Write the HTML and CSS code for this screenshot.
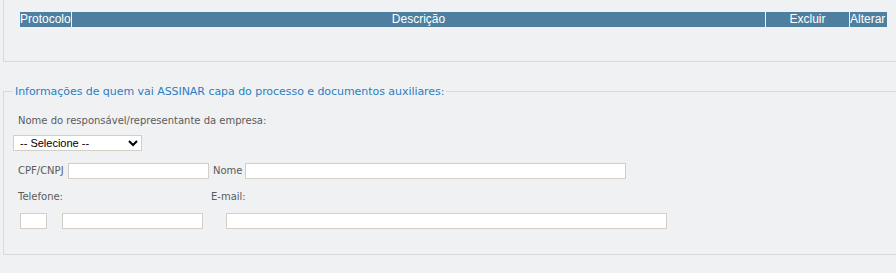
FILE: index.html
```html
<!DOCTYPE html>
<html lang="pt-BR">
<head>
<meta charset="utf-8">
<title>Assinatura</title>
<link rel="stylesheet" href="styles.css">
</head>
<body>
<div class="panel">
  <div class="thead">
    <div class="th th-proto">Protocolo</div>
    <div class="th th-desc">Descrição</div>
    <div class="th th-excl">Excluir</div>
    <div class="th th-alt">Alterar</div>
  </div>
</div>
<fieldset class="fs">
  <legend class="lg">Informações de quem vai ASSINAR capa do processo e documentos auxiliares:</legend>
  <div class="lbl lbl-resp">Nome do responsável/representante da empresa:</div>
  <select class="sel"><option>-- Selecione --</option></select>
  <div class="row row-cpf">
    <span class="lbl lbl-cpf">CPF/CNPJ</span>
    <input class="inp inp-cpf" type="text">
    <span class="lbl lbl-nome">Nome</span>
    <input class="inp inp-nome" type="text">
  </div>
  <div class="row row-tel">
    <span class="lbl lbl-tel">Telefone:</span>
    <span class="lbl">E-mail:</span>
  </div>
  <div class="row row-in">
    <input class="inp inp-ddd" type="text">
    <input class="inp inp-fone" type="text">
    <input class="inp inp-mail" type="text">
  </div>
</fieldset>
</body>
</html>
```
FILE: styles.css
```css
html, body { margin: 0; padding: 0; overflow: hidden; }
body { background: #f0f1f3; width: 896px; height: 273px; font-family: "DejaVu Sans", Verdana, sans-serif; }

.panel { margin-left: 3px; height: 62px; border-left: 1px solid #d8d9dc; border-bottom: 1px solid #d8d9dc; padding: 12px 0 0 16px; box-sizing: border-box; }
.thead { display: flex; width: 867px; font-family: "Liberation Sans", Arial, sans-serif; font-size: 12px; line-height: 15px; color: #fff; }
.th { background: #4e7fa1; height: 15px; white-space: nowrap; }
.th-proto { width: 51px; }
.th-desc { width: 693px; margin-left: 1px; text-align: center; }
.th-excl { width: 83px; margin-left: 1px; text-align: center; }
.th-alt { width: 37px; margin-left: 1px; }

.fs { margin: 23px 0 0 3px; border: 1px solid #d8d9dc; border-right: 0; padding: 0 0 25px 9px; min-width: 0; }
.lg { padding: 0 2px; font-size: 11px; line-height: 13px; color: #2c7ec2; letter-spacing: -0.05px; }

.lbl { font-size: 10px; line-height: 14px; color: #5b5b5b; white-space: nowrap; }
.lbl-resp { margin: 16px 0 0 5px; }
.sel { display: block; margin: 7px 0 0 0; width: 129px; height: 16px; box-sizing: border-box; border: 1px solid #d3cfc6; background: #fff; font-family: "Liberation Sans", Arial, sans-serif; font-size: 11px; color: #000; padding: 0 0 0 2px; }

.row { display: flex; align-items: center; }
.row-cpf { margin-top: 12px; padding-left: 5px; }
.lbl-cpf { width: 50px; }
.lbl-nome { margin-left: 4px; width: 32px; }
.inp { height: 16px; box-sizing: border-box; border: 1px solid #d3cfc6; background: #fff; padding: 0; margin: 0; }
.inp-cpf { width: 141px; }
.inp-nome { width: 381px; }

.row-tel { margin-top: 11px; padding-left: 5px; }
.lbl-tel { width: 193px; }

.row-in { margin-top: 9px; padding-left: 7px; }
.inp-ddd { width: 27px; }
.inp-fone { width: 141px; margin-left: 15px; }
.inp-mail { width: 441px; margin-left: 23px; }
```
